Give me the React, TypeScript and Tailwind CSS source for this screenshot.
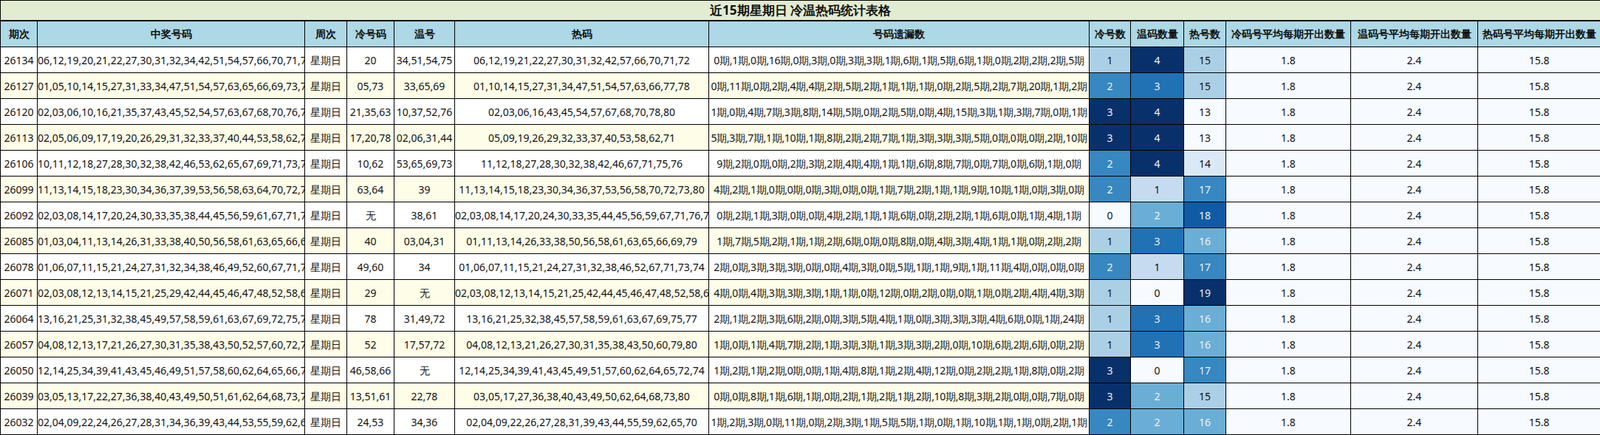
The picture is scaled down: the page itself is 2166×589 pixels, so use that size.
const widths = [50, 362, 57, 64, 82, 344, 515, 56, 72, 57, 169, 172, 166];

const headers = ["期次", "中奖号码", "周次", "冷号码", "温号", "热码", "号码遗漏数", "冷号数", "温码数量", "热号数", "冷码号平均每期开出数量", "温码号平均每期开出数量", "热码号平均每期开出数量"];

type Row = [string, string, string, string, string, string, number, number, number];

const rows: Row[] = [
  ["26134", "06,12,19,20,21,22,27,30,31,32,34,42,51,54,57,66,70,71,72,75", "20", "34,51,54,75", "06,12,19,21,22,27,30,31,32,42,57,66,70,71,72", "0期,1期,0期,16期,0期,3期,0期,3期,3期,1期,6期,1期,5期,6期,1期,0期,2期,2期,2期,5期", 1, 4, 15],
  ["26127", "01,05,10,14,15,27,31,33,34,47,51,54,57,63,65,66,69,73,77,78", "05,73", "33,65,69", "01,10,14,15,27,31,34,47,51,54,57,63,66,77,78", "0期,11期,0期,2期,4期,4期,2期,5期,2期,1期,1期,1期,0期,2期,5期,2期,7期,20期,1期,2期", 2, 3, 15],
  ["26120", "02,03,06,10,16,21,35,37,43,45,52,54,57,63,67,68,70,76,78,80", "21,35,63", "10,37,52,76", "02,03,06,16,43,45,54,57,67,68,70,78,80", "1期,0期,4期,7期,3期,8期,14期,5期,0期,2期,5期,0期,4期,15期,3期,1期,3期,7期,0期,1期", 3, 4, 13],
  ["26113", "02,05,06,09,17,19,20,26,29,31,32,33,37,40,44,53,58,62,71,78", "17,20,78", "02,06,31,44", "05,09,19,26,29,32,33,37,40,53,58,62,71", "5期,3期,7期,1期,10期,1期,8期,2期,2期,7期,1期,3期,3期,3期,5期,0期,0期,0期,2期,10期", 3, 4, 13],
  ["26106", "10,11,12,18,27,28,30,32,38,42,46,53,62,65,67,69,71,73,75,76", "10,62", "53,65,69,73", "11,12,18,27,28,30,32,38,42,46,67,71,75,76", "9期,2期,0期,0期,2期,3期,2期,4期,4期,1期,1期,6期,8期,7期,0期,7期,0期,6期,1期,0期", 2, 4, 14],
  ["26099", "11,13,14,15,18,23,30,34,36,37,39,53,56,58,63,64,70,72,73,80", "63,64", "39", "11,13,14,15,18,23,30,34,36,37,53,56,58,70,72,73,80", "4期,2期,1期,0期,0期,0期,3期,0期,0期,1期,7期,2期,1期,1期,9期,10期,1期,0期,3期,0期", 2, 1, 17],
  ["26092", "02,03,08,14,17,20,24,30,33,35,38,44,45,56,59,61,67,71,76,77", "无", "38,61", "02,03,08,14,17,20,24,30,33,35,44,45,56,59,67,71,76,77", "0期,2期,1期,3期,0期,0期,4期,2期,1期,1期,6期,0期,2期,2期,1期,6期,0期,1期,4期,1期", 0, 2, 18],
  ["26085", "01,03,04,11,13,14,26,31,33,38,40,50,56,58,61,63,65,66,69,79", "40", "03,04,31", "01,11,13,14,26,33,38,50,56,58,61,63,65,66,69,79", "1期,7期,5期,2期,1期,1期,2期,6期,0期,0期,8期,0期,4期,3期,4期,1期,1期,0期,2期,2期", 1, 3, 16],
  ["26078", "01,06,07,11,15,21,24,27,31,32,34,38,46,49,52,60,67,71,73,74", "49,60", "34", "01,06,07,11,15,21,24,27,31,32,38,46,52,67,71,73,74", "2期,0期,3期,3期,3期,0期,0期,4期,3期,0期,5期,1期,1期,9期,1期,11期,4期,0期,0期,0期", 2, 1, 17],
  ["26071", "02,03,08,12,13,14,15,21,25,29,42,44,45,46,47,48,52,58,63,66", "29", "无", "02,03,08,12,13,14,15,21,25,42,44,45,46,47,48,52,58,63,66", "4期,0期,4期,3期,3期,3期,1期,1期,0期,12期,0期,2期,0期,0期,1期,0期,2期,4期,4期,3期", 1, 0, 19],
  ["26064", "13,16,21,25,31,32,38,45,49,57,58,59,61,63,67,69,72,75,77,78", "78", "31,49,72", "13,16,21,25,32,38,45,57,58,59,61,63,67,69,75,77", "2期,1期,2期,3期,6期,2期,0期,3期,5期,4期,1期,0期,3期,3期,3期,4期,6期,0期,1期,24期", 1, 3, 16],
  ["26057", "04,08,12,13,17,21,26,27,30,31,35,38,43,50,52,57,60,72,79,80", "52", "17,57,72", "04,08,12,13,21,26,27,30,31,35,38,43,50,60,79,80", "1期,0期,1期,4期,7期,2期,1期,3期,3期,1期,3期,3期,2期,0期,10期,6期,2期,6期,0期,2期", 1, 3, 16],
  ["26050", "12,14,25,34,39,41,43,45,46,49,51,57,58,60,62,64,65,66,72,74", "46,58,66", "无", "12,14,25,34,39,41,43,45,49,51,57,60,62,64,65,72,74", "1期,2期,1期,2期,0期,0期,1期,4期,8期,1期,2期,4期,12期,0期,2期,2期,1期,8期,0期,2期", 3, 0, 17],
  ["26039", "03,05,13,17,22,27,36,38,40,43,49,50,51,61,62,64,68,73,78,80", "13,51,61", "22,78", "03,05,17,27,36,38,40,43,49,50,62,64,68,73,80", "0期,0期,8期,1期,6期,1期,0期,2期,1期,2期,1期,2期,10期,8期,3期,2期,0期,0期,7期,0期", 3, 2, 15],
  ["26032", "02,04,09,22,24,26,27,28,31,34,36,39,43,44,53,55,59,62,65,70", "24,53", "34,36", "02,04,09,22,26,27,28,31,39,43,44,55,59,62,65,70", "1期,2期,3期,0期,11期,0期,2期,3期,1期,5期,5期,1期,0期,1期,10期,1期,1期,0期,2期,1期", 2, 2, 16],
];

const coldCls: Record<number, string> = {
  0: "bg-[#f7fbff] text-[#111]",
  1: "bg-[#abd0e6] text-[#111]",
  2: "bg-[#3787c0] text-[#f0f0f0]",
  3: "bg-[#08306b] text-[#f0f0f0]",
};
const warmCls: Record<number, string> = {
  0: "bg-[#f7fbff] text-[#111]",
  1: "bg-[#c6dbef] text-[#111]",
  2: "bg-[#6aaed6] text-[#f0f0f0]",
  3: "bg-[#2171b5] text-[#f0f0f0]",
  4: "bg-[#08306b] text-[#f0f0f0]",
};
const hotCls: Record<number, string> = {
  13: "bg-[#f7fbff] text-[#111]",
  14: "bg-[#dbe9f6] text-[#111]",
  15: "bg-[#abd0e6] text-[#111]",
  16: "bg-[#6aaed6] text-[#f0f0f0]",
  17: "bg-[#3787c0] text-[#f0f0f0]",
  18: "bg-[#105ba4] text-[#f0f0f0]",
  19: "bg-[#08306b] text-[#f0f0f0]",
};

const cell = "border border-black text-center whitespace-nowrap overflow-hidden p-0 text-[14px]";
const cjk = "font-[family-name:'Noto_Sans_CJK_SC',sans-serif]";

export default function App() {
  return (
    <div className="w-[2166px] bg-white font-[family-name:'Liberation_Serif','Noto_Sans_CJK_SC',serif] text-[#111]">
      <table className="w-[2166px] table-fixed border-collapse">
        <colgroup>
          {widths.map((w, i) => (
            <col key={i} style={{ width: w }} />
          ))}
        </colgroup>
        <thead>
          <tr className="h-[27px]">
            <th colSpan={13} className={`border border-black border-b-2 bg-[#e2ecd0] text-[17px] font-bold ${cjk}`}>
              近15期星期日 冷温热码统计表格
            </th>
          </tr>
          <tr className="h-[36px] bg-[#add8e6]">
            {headers.map((h) => (
              <th key={h} className={`${cell} font-bold ${cjk}`}>
                {h}
              </th>
            ))}
          </tr>
        </thead>
        <tbody>
          {rows.map((r, i) => (
            <tr key={r[0]} className={`h-[35px] ${i % 2 ? "bg-[#fdfde8]" : "bg-white"}`}>
              <td className={cell}>{r[0]}</td>
              <td className={cell}>{r[1]}</td>
              <td className={`${cell} ${cjk}`}>星期日</td>
              <td className={`${cell} ${r[2] === "无" ? cjk : ""}`}>{r[2]}</td>
              <td className={`${cell} ${r[3] === "无" ? cjk : ""}`}>{r[3]}</td>
              <td className={cell}>{r[4]}</td>
              <td className={`${cell} tracking-[-0.3px]`}>{r[5]}</td>
              <td className={`${cell} ${coldCls[r[6]]}`}>{r[6]}</td>
              <td className={`${cell} ${warmCls[r[7]]}`}>{r[7]}</td>
              <td className={`${cell} ${hotCls[r[8]]}`}>{r[8]}</td>
              <td className={`${cell} bg-[#f7fbff]`}>1.8</td>
              <td className={`${cell} bg-[#f7fbff]`}>2.4</td>
              <td className={`${cell} bg-[#f7fbff]`}>15.8</td>
            </tr>
          ))}
        </tbody>
      </table>
    </div>
  );
}
